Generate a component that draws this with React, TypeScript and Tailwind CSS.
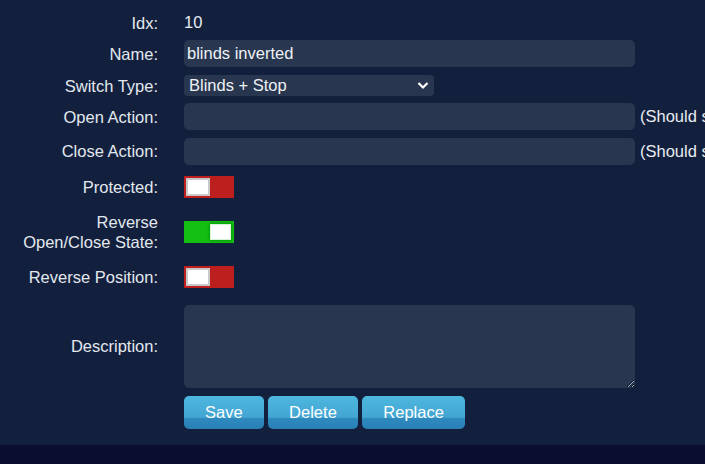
import React from "react";

type ToggleProps = { on: boolean };

function Toggle({ on }: ToggleProps) {
  return (
    <div
      className={
        on
          ? "flex h-[22px] w-[50px] items-center justify-end bg-[#13bf13] pr-[3px]"
          : "flex h-[22px] w-[50px] items-center justify-start bg-[#bd1e1e] pl-[2px]"
      }
    >
      {on ? (
        <div className="h-[16px] w-[21px] border border-[#d4f5d4] bg-white shadow-[0_0_3px_1px_#0a9a0a]" />
      ) : (
        <div className="h-[18px] w-[24px] border-2 border-[#c9c9c9] bg-white" />
      )}
    </div>
  );
}

function Row({
  label,
  h,
  children,
}: {
  label: React.ReactNode;
  h: string;
  children?: React.ReactNode;
}) {
  return (
    <div className={`flex items-center ${h}`}>
      <div className="w-[158px] shrink-0 text-right leading-[20px] text-[#e3e8ee]">
        {label}
      </div>
      <div className="ml-[26px] flex items-center whitespace-nowrap">
        {children}
      </div>
    </div>
  );
}

export default function App() {
  return (
    <div
      className="flex h-[464px] w-[705px] flex-col overflow-hidden bg-[#0b0d2e] text-[16.5px] text-[#e8ecf0]"
      style={{ fontFamily: '"Liberation Sans", Arial, sans-serif' }}
    >
      <div className="h-[445px] shrink-0 bg-[#12203e] pt-[10px]">
        <Row label="Idx:" h="h-[25px]">
          <span>10</span>
        </Row>
        <Row label="Name:" h="h-[37px]">
          <input
            type="text"
            defaultValue="blinds inverted"
            className="h-[27px] w-[451px] rounded-[5px] bg-[#28374f] px-[3px] text-[#eef2f6] outline-none"
          />
        </Row>
        <Row label="Switch Type:" h="h-[27px]">
          <div className="relative flex h-[21px] w-[250px] items-center rounded-[4px] bg-[#28374f] pl-[5px] text-[#eef2f6]">
            <span>Blinds + Stop</span>
            <svg
              className="absolute right-[5px] top-[6px]"
              width="12"
              height="9"
              viewBox="0 0 12 9"
              fill="none"
            >
              <path d="M1.5 2 L6 6.5 L10.5 2" stroke="#ffffff" strokeWidth="2.2" />
            </svg>
          </div>
        </Row>
        <Row label="Open Action:" h="h-[35px]">
          <input
            type="text"
            className="h-[27px] w-[451px] rounded-[5px] bg-[#28374f] px-[3px] outline-none"
          />
          <span className="ml-[5px]">(Should start with script://, http://, https://)</span>
        </Row>
        <Row label="Close Action:" h="h-[34px]">
          <input
            type="text"
            className="h-[27px] w-[451px] rounded-[5px] bg-[#28374f] px-[3px] outline-none"
          />
          <span className="ml-[5px]">(Should start with script://, http://, https://)</span>
        </Row>
        <Row label="Protected:" h="h-[38px]">
          <Toggle on={false} />
        </Row>
        <Row
          label={
            <>
              Reverse
              <br />
              Open/Close State:
            </>
          }
          h="h-[52px]"
        >
          <Toggle on={true} />
        </Row>
        <Row label="Reverse Position:" h="h-[38px]">
          <Toggle on={false} />
        </Row>
        <Row label="Description:" h="h-[100px]">
          <textarea className="block h-[83px] w-[451px] rounded-[5px] bg-[#28374f] px-[3px] outline-none" />
        </Row>
        <div className="ml-[184px] flex gap-[4.5px]">
          {["Save", "Delete", "Replace"].map((t) => (
            <button
              key={t}
              type="button"
              className="h-[33px] rounded-[5px] bg-[linear-gradient(to_bottom,#4db7df_0%,#43a5d2_65%,#2e8abf_66%,#2a7fb6_100%)] px-[21px] text-white"
            >
              {t}
            </button>
          ))}
        </div>
      </div>
    </div>
  );
}
